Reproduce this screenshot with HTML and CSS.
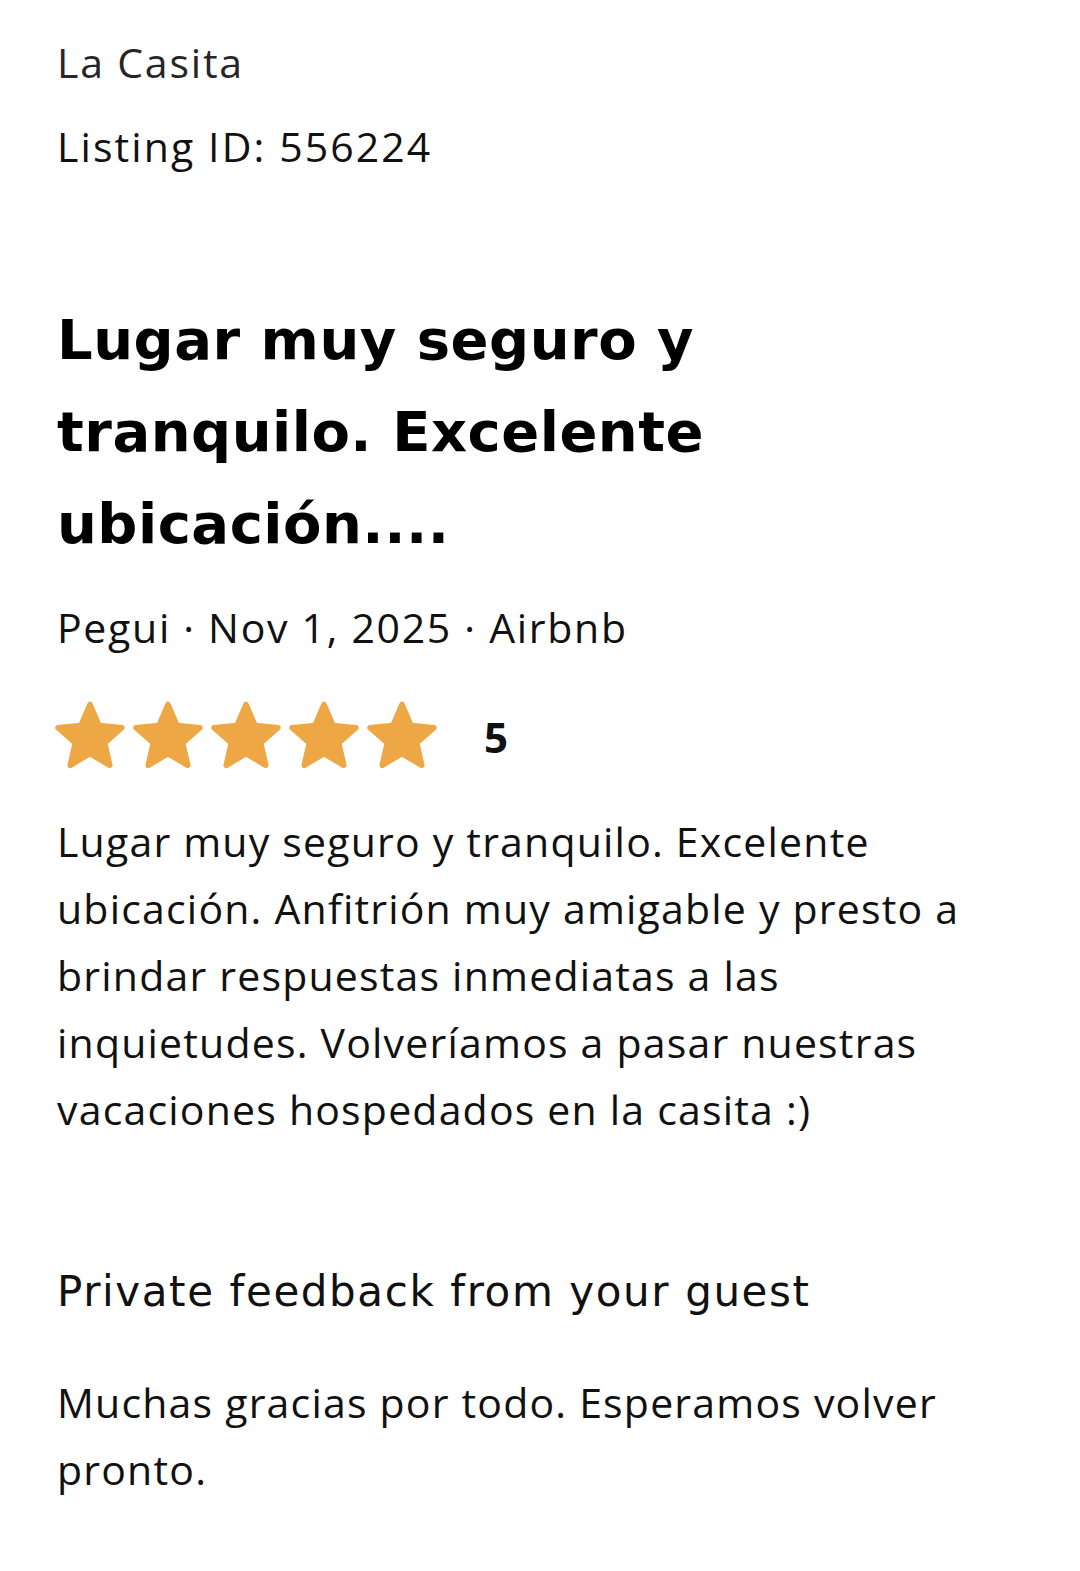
FILE: index.html
```html
<!DOCTYPE html>
<html lang="es">
<head>
  <meta charset="UTF-8" />
  <meta name="viewport" content="width=device-width, initial-scale=1.0"/>
  <title>Reseña - La Casita</title>
  <link rel="stylesheet" href="styles.css">
</head>
<body>
  <div class="page">
    <p class="listing-name">La Casita</p>
    <p class="listing-id">Listing ID: 556224</p>

    <h1 class="review-title">Lugar muy seguro y tranquilo. Excelente ubicación....</h1>
    <p class="review-meta">Pegui · Nov 1, 2025 · Airbnb</p>

    <div class="rating">
      <div class="stars">
        <svg class="star" viewBox="0 0 100 100"><polygon points="50,5 62.93,35.2 95.65,38.17 70.92,59.8 78.21,91.83 50,75 21.79,91.83 29.08,59.8 4.35,38.17 37.07,35.2"/></svg>
        <svg class="star" viewBox="0 0 100 100"><polygon points="50,5 62.93,35.2 95.65,38.17 70.92,59.8 78.21,91.83 50,75 21.79,91.83 29.08,59.8 4.35,38.17 37.07,35.2"/></svg>
        <svg class="star" viewBox="0 0 100 100"><polygon points="50,5 62.93,35.2 95.65,38.17 70.92,59.8 78.21,91.83 50,75 21.79,91.83 29.08,59.8 4.35,38.17 37.07,35.2"/></svg>
        <svg class="star" viewBox="0 0 100 100"><polygon points="50,5 62.93,35.2 95.65,38.17 70.92,59.8 78.21,91.83 50,75 21.79,91.83 29.08,59.8 4.35,38.17 37.07,35.2"/></svg>
        <svg class="star" viewBox="0 0 100 100"><polygon points="50,5 62.93,35.2 95.65,38.17 70.92,59.8 78.21,91.83 50,75 21.79,91.83 29.08,59.8 4.35,38.17 37.07,35.2"/></svg>
      </div>
      <span class="rating-value">5</span>
    </div>

    <p class="review-body">Lugar muy seguro y tranquilo. Excelente ubicación. Anfitrión muy amigable y presto a brindar respuestas inmediatas a las inquietudes. Volveríamos a pasar nuestras vacaciones hospedados en la casita :)</p>

    <h2 class="private-title">Private feedback from your guest</h2>
    <p class="private-body">Muchas gracias por todo. Esperamos volver pronto.</p>
  </div>
</body>
</html>
```

FILE: styles.css
```css
body {
  margin: 0;
  background: #ffffff;
  font-family: 'Open Sans', 'Noto Sans', sans-serif;
  color: #111111;
}

p, h1, h2 {
  margin: 0;
}

.page {
  padding: 20px 40px 60px 57px;
}

.listing-name {
  font-size: 41px;
  line-height: 84px;
  letter-spacing: 1.8px;
  color: #262626;
}

.listing-id {
  font-size: 41px;
  line-height: 84px;
  letter-spacing: 2.1px;
}

.review-title {
  margin-top: 106px;
  font-family: 'DejaVu Sans', sans-serif;
  font-weight: 700;
  font-size: 56px;
  line-height: 92px;
  letter-spacing: 0.5px;
  color: #000;
  max-width: 720px;
}

.review-meta {
  margin-top: 27px;
  font-size: 41px;
  line-height: 60px;
  letter-spacing: 1.7px;
}

.rating {
  display: flex;
  align-items: center;
  margin-top: 44px;
  height: 70px;
}

.stars {
  display: flex;
  gap: 8px;
  margin-left: -2px;
}

.star {
  width: 70px;
  height: 70px;
}

.star polygon {
  fill: #eda745;
  stroke: #eda745;
  stroke-width: 8;
  stroke-linejoin: round;
}

.rating-value {
  margin-left: 47px;
  font-size: 42px;
  font-weight: 700;
}

.review-body {
  margin-top: 37px;
  font-size: 41px;
  line-height: 67px;
  letter-spacing: 1.2px;
  max-width: 935px;
}

.private-title {
  margin-top: 119px;
  font-family: 'DejaVu Sans', sans-serif;
  font-size: 42px;
  font-weight: 400;
  line-height: 60px;
  letter-spacing: 1.6px;
}

.private-body {
  margin-top: 47px;
  font-size: 41px;
  line-height: 67px;
  letter-spacing: 1.2px;
  max-width: 935px;
}
```
